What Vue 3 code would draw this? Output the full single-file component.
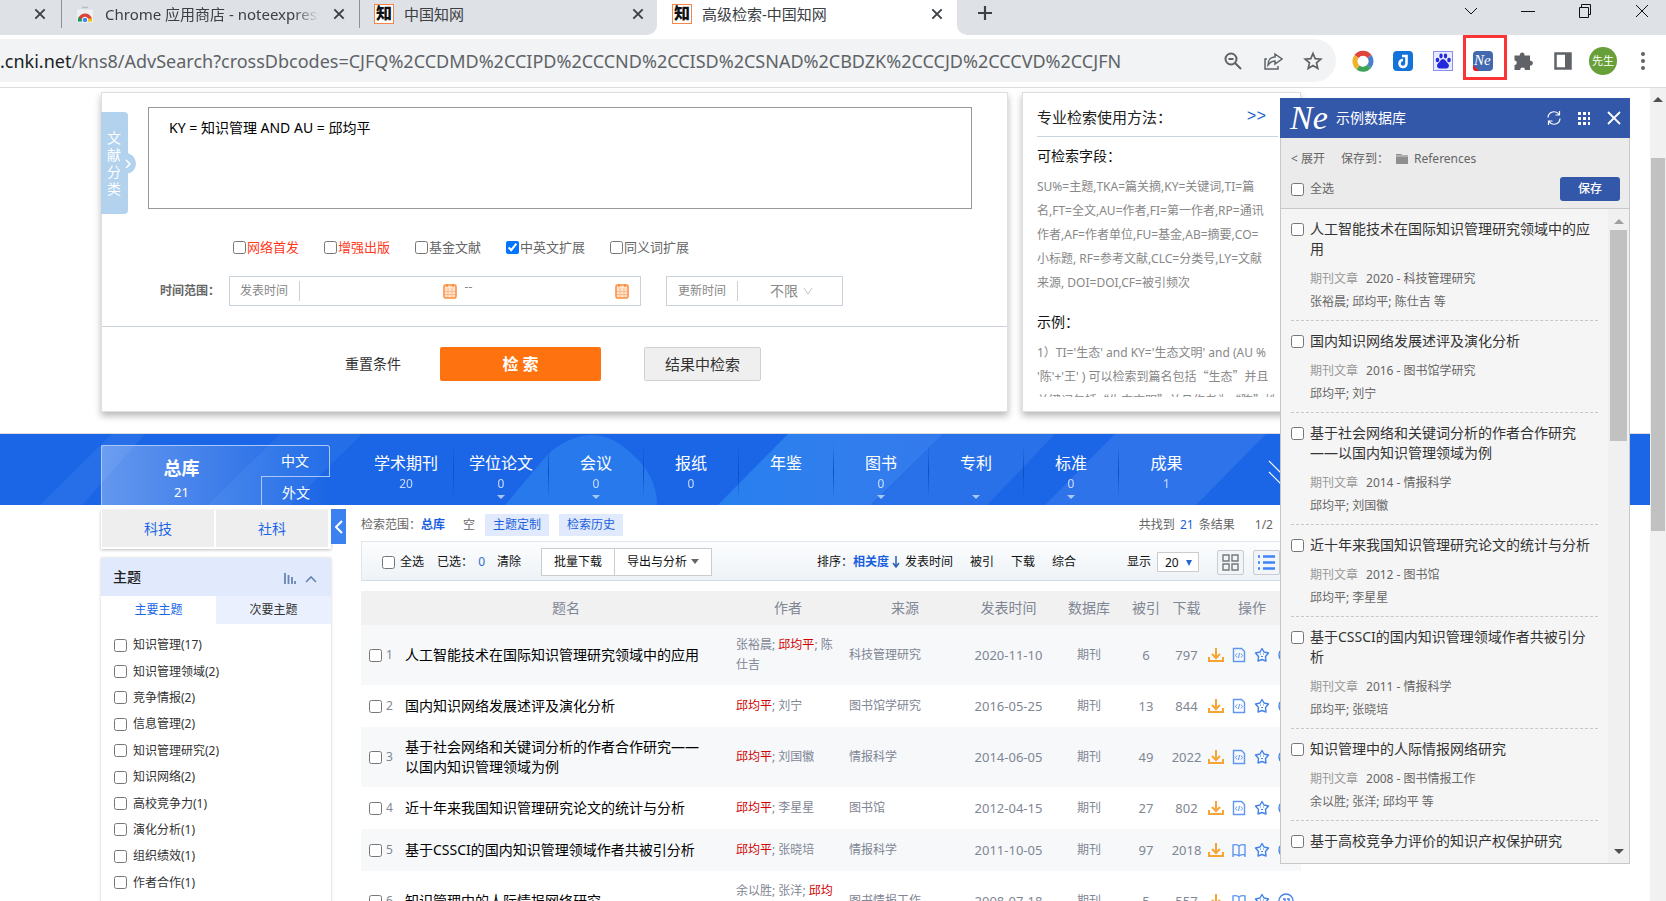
<script setup>
import { ref } from 'vue'

const query = ref('KY = 知识管理 AND AU = 邱均平')
const address = ref('/kns8/AdvSearch?crossDbcodes=CJFQ%2CCDMD%2CCIPD%2CCCND%2CCISD%2CSNAD%2CBDZK%2CCCJD%2CCCVD%2CCJFN')

const options = ref([
  { label: '网络首发', hot: true, on: false },
  { label: '增强出版', hot: true, on: false },
  { label: '基金文献', hot: false, on: false },
  { label: '中英文扩展', hot: false, on: true },
  { label: '同义词扩展', hot: false, on: false }
])

const kinds = [
  { name: '学术期刊', count: '20', more: false },
  { name: '学位论文', count: '0', more: true },
  { name: '会议', count: '0', more: true },
  { name: '报纸', count: '0', more: false },
  { name: '年鉴', count: '', more: false },
  { name: '图书', count: '0', more: true },
  { name: '专利', count: '', more: true },
  { name: '标准', count: '0', more: true },
  { name: '成果', count: '1', more: false }
]

const topics = [
  ['知识管理', 17], ['知识管理领域', 2], ['竞争情报', 2], ['信息管理', 2], ['知识管理研究', 2],
  ['知识网络', 2], ['高校竞争力', 1], ['演化分析', 1], ['组织绩效', 1], ['作者合作', 1]
]

const rows = [
  { title: '人工智能技术在国际知识管理研究领域中的应用', authors: ['张裕晨', '邱均平', '陈仕吉'], source: '科技管理研究', date: '2020-11-10', cited: 6, down: 797, html: true, tall: true },
  { title: '国内知识网络发展述评及演化分析', authors: ['邱均平', '刘宁'], source: '图书馆学研究', date: '2016-05-25', cited: 13, down: 844, html: true },
  { title: '基于社会网络和关键词分析的作者合作研究——以国内知识管理领域为例', authors: ['邱均平', '刘国徽'], source: '情报科学', date: '2014-06-05', cited: 49, down: 2022, html: true, tall: true },
  { title: '近十年来我国知识管理研究论文的统计与分析', authors: ['邱均平', '李星星'], source: '图书馆', date: '2012-04-15', cited: 27, down: 802, html: true },
  { title: '基于CSSCI的国内知识管理领域作者共被引分析', authors: ['邱均平', '张晓培'], source: '情报科学', date: '2011-10-05', cited: 97, down: 2018, html: false },
  { title: '知识管理中的人际情报网络研究', authors: ['余以胜', '张洋', '邱均平'], source: '图书情报工作', date: '2008-07-18', cited: 5, down: 557, html: false, tall: true }
]

const clips = [
  { title: '人工智能技术在国际知识管理研究领域中的应用', info: '2020 - 科技管理研究', authors: '张裕晨; 邱均平; 陈仕吉 等' },
  { title: '国内知识网络发展述评及演化分析', info: '2016 - 图书馆学研究', authors: '邱均平; 刘宁' },
  { title: '基于社会网络和关键词分析的作者合作研究——以国内知识管理领域为例', info: '2014 - 情报科学', authors: '邱均平; 刘国徽' },
  { title: '近十年来我国知识管理研究论文的统计与分析', info: '2012 - 图书馆', authors: '邱均平; 李星星' },
  { title: '基于CSSCI的国内知识管理领域作者共被引分析', info: '2011 - 情报科学', authors: '邱均平; 张晓培' },
  { title: '知识管理中的人际情报网络研究', info: '2008 - 图书情报工作', authors: '余以胜; 张洋; 邱均平 等' },
  { title: '基于高校竞争力评价的知识产权保护研究', info: '', authors: '' }
]
</script>

<template>
  <div class="window">
    <header class="tabs">
      <div class="tab tab-first">
        <button class="x" aria-label="关闭"><svg viewBox="0 0 12 12"><path d="M2 2l8 8M10 2l-8 8" /></svg></button>
      </div>
      <div class="tab tab-store">
        <svg class="store" viewBox="0 0 16 16"><path d="M5 1h6" stroke="#b9bcc0" stroke-width="1.4" /><path d="M0 3h16v13H0z" fill="#eef0f2" /><path d="M1 15a7 7 0 0 1 14-2H8z" fill="#db4437" /><path d="M1 15a7 7 0 0 1 1-5l4 5z" fill="#0f9d58" /><path d="M8 12h7v3H9z" fill="#fbbc05" /><circle cx="8" cy="13.500" r="2.800" fill="#4285f4" stroke="#fff" /></svg>
        <span class="tab-name fade">Chrome 应用商店 - noteexpress</span>
        <button class="x" aria-label="关闭"><svg viewBox="0 0 12 12"><path d="M2 2l8 8M10 2l-8 8" /></svg></button>
      </div>
      <div class="tab tab-cnki">
        <i class="zhi">知</i><span class="tab-name">中国知网</span>
        <button class="x" aria-label="关闭"><svg viewBox="0 0 12 12"><path d="M2 2l8 8M10 2l-8 8" /></svg></button>
      </div>
      <div class="tab tab-active">
        <i class="zhi">知</i><span class="tab-name">高级检索-中国知网</span>
        <button class="x" aria-label="关闭"><svg viewBox="0 0 12 12"><path d="M2 2l8 8M10 2l-8 8" /></svg></button>
      </div>
      <div class="strip">
        <button class="plus" aria-label="新标签页"><svg viewBox="0 0 16 16"><path d="M8 1v14M1 8h14" /></svg></button>
        <div class="controls">
          <button aria-label="搜索标签页"><svg viewBox="0 0 14 14"><path d="M1 4l6 6 6-6" /></svg></button>
          <button aria-label="最小化"><svg viewBox="0 0 14 14"><path d="M0 7.500h14" /></svg></button>
          <button aria-label="还原"><svg viewBox="0 0 14 14"><path d="M1.500 3.500h9v10h-9zM3.500 3.500v-3h9v10h-2" /></svg></button>
          <button aria-label="关闭窗口"><svg viewBox="0 0 14 14"><path d="M1 1l12 12M13 1L1 13" /></svg></button>
        </div>
      </div>
    </header>

    <div class="toolbar">
      <div class="omnibox">
        <span class="host">.cnki.net</span>
        <input v-model="address" class="address" type="text" aria-label="地址栏" />
        <button class="tool" aria-label="缩放"><svg viewBox="0 0 20 20"><circle cx="8" cy="8" r="5.500" /><path d="M12 12l6 6M5.500 8h5" /></svg></button>
        <button class="tool" aria-label="分享"><svg viewBox="0 0 20 20"><path d="M4 8H2v10h13v-3" stroke-width="1.500" /><path d="M12 3l7 5-7 5v-3c-3 0-5 1-7 4 0-5 3-8 7-8z" stroke-width="1.500" /></svg></button>
        <button class="tool" aria-label="收藏"><svg viewBox="0 0 20 20"><path d="M10 2.500l2.200 5.200 5.600.500-4.300 3.700 1.300 5.500L10 14.500l-4.800 2.900 1.300-5.500-4.300-3.700 5.600-.500z" stroke-width="1.700" /></svg></button>
      </div>
      <div class="exts">
        <svg viewBox="0 0 22 22"><g fill="none" stroke-width="5"><path d="M4.500 6.500a8 8 0 0 1 13 0" stroke="#e0453b" /><path d="M17.500 6.500a8 8 0 0 1-.500 10" stroke="#4a7fd0" /><path d="M17 16.500a8 8 0 0 1-11 1" stroke="#3fa35b" /><path d="M6 17.500a8 8 0 0 1-1.500-11" stroke="#efb22c" /></g></svg>
        <svg viewBox="0 0 22 22"><rect x="1" y="1" width="20" height="20" rx="4" fill="#1473d8" /><path d="M10 6h4.500v7.500a3.500 3.500 0 1 1-3.500-3.500" fill="none" stroke="#fff" stroke-width="2.600" /></svg>
        <svg viewBox="0 0 22 22"><rect x="1.500" y="1.500" width="19" height="19" fill="#e8ebff" stroke="#8b90f0" /><g fill="#2329dc"><ellipse cx="5.500" cy="10" rx="1.800" ry="2.300" /><ellipse cx="9" cy="6" rx="1.700" ry="2.400" /><ellipse cx="13.500" cy="6" rx="1.700" ry="2.400" /><ellipse cx="17" cy="10" rx="1.800" ry="2.300" /><path d="M11 9c2 0 3 2.500 5 4.500s.500 5-1.500 5h-7c-2 0-3.500-3-1.500-5S9 9 11 9z" /></g></svg>
        <span class="marked"><svg viewBox="0 0 22 22"><rect x="1" y="1" width="20" height="20" rx="4" fill="#4268ae" /><path d="M1 15l6 6H4a3 3 0 0 1-3-3z" fill="#f01818" /><text x="2" y="15" font-family="Liberation Serif, serif" font-style="italic" font-size="15" fill="#fff">Ne</text></svg></span>
        <svg viewBox="0 0 22 22"><path d="M2.500 5.500h5.300a2.400 2.400 0 1 1 4.700 0H18v5.300a2.400 2.400 0 1 1 0 4.700V20h-5a2.400 2.400 0 0 0-4.800 0H2.500v-5a2.300 2.300 0 0 0 0-4.600z" fill="#5f6368" /></svg>
        <svg viewBox="0 0 22 22"><path d="M3.500 3.500h15v15h-15z" fill="#fff" stroke="#5f6368" stroke-width="2.500" /><path d="M13 3h6v16h-6z" fill="#5f6368" /></svg>
        <span class="avatar">先生</span>
        <svg viewBox="0 0 22 22"><g fill="#5f6368"><circle cx="11" cy="4" r="2" /><circle cx="11" cy="11" r="2" /><circle cx="11" cy="18" r="2" /></g></svg>
      </div>
    </div>

    <div class="viewport">
      <main class="page">
        <section class="top wrap">
          <form class="card search" @submit.prevent>
            <div class="side-tab">文献分类<span class="knob"><svg viewBox="0 0 8 12"><path d="M2 2l4 4-4 4" /></svg></span></div>
            <textarea v-model="query" aria-label="检索式"></textarea>
            <div class="options">
              <label v-for="o in options" :key="o.label" :class="{ hot: o.hot }"><input v-model="o.on" type="checkbox" />{{ o.label }}</label>
            </div>
            <div class="range">
              <b>时间范围：</b>
              <div class="dates">
                <span class="lead">发表时间</span>
                <input type="text" aria-label="开始日期" />
                <svg class="cal" viewBox="0 0 14 16"><rect x="1" y="2" width="12" height="13" rx="1.500" /><path class="grid" d="M2 8.500h10M2 11.500h10M5 5v9M9 5v9" /><path d="M4 1v3M10 1v3" /></svg>
                <span class="to">--</span>
                <input type="text" aria-label="结束日期" />
                <svg class="cal" viewBox="0 0 14 16"><rect x="1" y="2" width="12" height="13" rx="1.500" /><path class="grid" d="M2 8.500h10M2 11.500h10M5 5v9M9 5v9" /><path d="M4 1v3M10 1v3" /></svg>
              </div>
              <div class="updated">
                <label class="lead" for="upd">更新时间</label>
                <select id="upd"><option>不限</option></select>
                <svg class="vee" viewBox="0 0 10 8"><path d="M1 1l4 6 4-6" /></svg>
              </div>
            </div>
            <div class="actions">
              <a href="#">重置条件</a>
              <button class="go" type="submit">检 索</button>
              <button class="within" type="button">结果中检索</button>
            </div>
          </form>
          <aside class="card help">
            <div class="help-head"><h2>专业检索使用方法：</h2><a href="#">&gt;&gt;</a></div>
            <div class="help-body">
              <h3>可检索字段：</h3>
              <p>SU%=主题,TKA=篇关摘,KY=关键词,TI=篇<br />名,FT=全文,AU=作者,FI=第一作者,RP=通讯<br />作者,AF=作者单位,FU=基金,AB=摘要,CO=<br />小标题, RF=参考文献,CLC=分类号,LY=文献<br />来源, DOI=DOI,CF=被引频次</p>
              <h3 class="second">示例：</h3>
              <p>1）TI='生态' and KY='生态文明' and (AU %<br />'陈'+'王' ) 可以检索到篇名包括<span class="cjk">“生态”</span>并且<br />关键词包括<span class="cjk">“生态文明”</span>并且作者为<span class="cjk">“陈”</span>姓</p>
            </div>
          </aside>
        </section>

        <nav class="band">
          <svg class="rays" viewBox="0 0 1650 71" preserveAspectRatio="none">
            <defs><linearGradient id="ray"><stop offset="0" stop-color="#2a86f0" stop-opacity=".8" /><stop offset="1" stop-color="#4f92f5" stop-opacity=".45" /></linearGradient></defs>
            <path d="M112 0h33L82 71H40z" fill="#3b82ee" opacity=".35" />
            <path d="M280 0h82l-72 71h-82z" fill="#3b82ee" opacity=".3" />
            <path d="M505 71L548 20q45-38 84 0 25 22 25 51z" fill="#2c80ee" opacity=".75" />
            <path d="M788 0h155l-72 71H718z" fill="url(#ray)" />
            <path d="M943 0h112l-68 71H872z" fill="#3b7fee" opacity=".45" />
            <path d="M1115 0h151l-70 71h-151z" fill="#4480f0" opacity=".5" />
          </svg>
          <div class="band-in wrap">
            <div class="total">
              <a class="all" href="#"><b>总库</b><span>21</span></a>
              <div class="langs"><a href="#">中文</a><a href="#">外文</a></div>
            </div>
            <ul class="kinds">
              <li v-for="k in kinds" :key="k.name">
                <a href="#"><span>{{ k.name }}</span><em>{{ k.count }}</em><i v-if="k.more"></i></a>
              </li>
            </ul>
            <svg class="next" viewBox="0 0 24 24"><path d="M1 1l14 14M1 12l14 14" /></svg>
          </div>
        </nav>

        <div class="body wrap">
          <aside class="filters">
            <div class="fields"><a href="#">科技</a><a href="#">社科</a></div>
            <section class="facet">
              <header>
                <h2>主题</h2>
                <svg class="bars" viewBox="0 0 12 11"><path d="M1 0v11M4.500 2v9M8 4v7M11 8v3" /></svg>
                <svg class="up" viewBox="0 0 12 8"><path d="M1 7l5-5 5 5" /></svg>
              </header>
              <div class="facet-tabs"><button class="on">主要主题</button><button>次要主题</button></div>
              <ul>
                <li v-for="t in topics" :key="t[0]"><label><input type="checkbox" />{{ t[0] }}({{ t[1] }})</label></li>
              </ul>
            </section>
          </aside>
          <button class="fold" aria-label="收起"><svg viewBox="0 0 8 14"><path d="M7 1L1 7l6 6" /></svg></button>

          <section class="results">
            <div class="scope">
              <span>检索范围：</span><b>总库</b><span class="empty">空</span>
              <a class="pill" href="#">主题定制</a><a class="pill" href="#">检索历史</a>
              <span class="found">共找到 <em>21</em> 条结果</span><span>1/2</span>
            </div>
            <div class="bar">
              <label class="pick-all"><input type="checkbox" />全选</label>
              <span class="chosen">已选： <em>0</em></span>
              <a class="clear" href="#">清除</a>
              <div class="batch"><button>批量下载</button><button>导出与分析<i></i></button></div>
              <div class="sort">
                <span>排序：</span><a class="cur" href="#">相关度</a>
                <svg viewBox="0 0 8 12"><path d="M4 0v10M1 7l3 4 3-4" /></svg>
                <a href="#">发表时间</a><a href="#">被引</a><a href="#">下载</a><a href="#">综合</a>
              </div>
              <div class="show">
                <label for="size">显示</label>
                <span class="size"><select id="size"><option>20</option></select><i></i></span>
                <button class="view" aria-label="网格"><svg viewBox="0 0 17 17"><path d="M1 1h6v6H1zM10 1h6v6h-6zM1 10h6v6H1zM10 10h6v6h-6z" /></svg></button>
                <button class="view lines" aria-label="列表"><svg viewBox="0 0 17 17"><path d="M0 2.500h2M5 2.500h12M0 8.500h2M5 8.500h12M0 14.500h2M5 14.500h12" /></svg></button>
              </div>
            </div>
            <table>
              <colgroup><col class="c-num" /><col /><col class="c-au" /><col class="c-src" /><col class="c-date" /><col class="c-db" /><col class="c-cite" /><col class="c-down" /><col class="c-ops" /></colgroup>
              <thead>
                <tr><th></th><th>题名</th><th>作者</th><th>来源</th><th>发表时间</th><th>数据库</th><th>被引</th><th>下载</th><th>操作</th></tr>
              </thead>
              <tbody>
                <tr v-for="(r, i) in rows" :key="r.title" :class="{ tall: r.tall }">
                  <td class="num"><label><input type="checkbox" />{{ i + 1 }}</label></td>
                  <td class="title"><a href="#">{{ r.title }}</a></td>
                  <td class="au"><template v-for="(a, n) in r.authors" :key="a"><a href="#" :class="{ hit: a === '邱均平' }">{{ a }}</a><template v-if="n < r.authors.length - 1">; </template></template></td>
                  <td class="src"><a href="#">{{ r.source }}</a></td>
                  <td class="fig">{{ r.date }}</td>
                  <td>期刊</td>
                  <td class="fig">{{ r.cited }}</td>
                  <td class="fig">{{ r.down }}</td>
                  <td class="ops"><div>
                    <svg class="dl" viewBox="0 0 16 16"><path d="M8 1v10M4 7l4 4 4-4M1 10v4h14v-4" /></svg>
                    <svg v-if="r.html" class="doc" viewBox="0 0 14 16"><path d="M1.500 1.500h8l3 3v10h-11z" /><path d="M5 6.500L3.500 8.500 5 10.500M9 6.500l1.500 2L9 10.500M7.500 6l-1 5" stroke-width="1" /></svg>
                    <svg v-else class="doc" viewBox="0 0 14 16"><path d="M7 4v10M1 13V3q3-1 6 1 3-2 6-1v10q-3-1-6 1-3-2-6-1zM1 13v2M13 13v2" /></svg>
                    <svg class="fav" viewBox="0 0 16 16"><path d="M8 1.500l2 3.500 4.500 1-3 3.500.500 4.500L8 12.500 4 14l.500-4.500-3-3.500L6 5z" stroke-linejoin="round" /><path d="M6 7h1M9 7h1M7 9.500h2" stroke-width="1" /></svg>
                    <svg class="cite" viewBox="0 0 16 16"><circle cx="8" cy="8" r="7" /><path d="M5 6h2v2q0 2-2 2M9 6h2v2q0 2-2 2" stroke-width="1.500" /></svg>
                  </div></td>
                </tr>
              </tbody>
            </table>
          </section>
        </div>
      </main>
      <div class="scroll"><i class="tri up-tri"></i><span></span></div>

      <aside class="panel">
        <header>
          <span class="ne">Ne</span><h2>示例数据库</h2>
          <button aria-label="刷新"><svg viewBox="0 0 14 14"><path d="M1 6.500A6 6 0 0 1 12 3.500M13 7.500A6 6 0 0 1 2 10.500M12.500 0v4h-4M1.500 14v-4h4" stroke-width="1.200" /></svg></button>
          <button aria-label="菜单"><svg viewBox="0 0 14 14" class="nine"><path d="M1 2.500h12M1 7.500h12M1 12.500h12" /></svg></button>
          <button aria-label="关闭面板"><svg viewBox="0 0 14 14"><path d="M1 1l12 12M13 1L1 13" stroke-width="1.800" /></svg></button>
        </header>
        <div class="dest">
          <div class="path"><a href="#">&lt; 展开</a><span>保存到：</span><svg viewBox="0 0 12 10"><path d="M0 0h5l1 1h6v9H0z" fill="#8f8f8f" /><path d="M0 2h12" stroke="#d0d0d0" /></svg><span>References</span></div>
          <div class="save"><label><input type="checkbox" />全选</label><button>保存</button></div>
        </div>
        <div class="clips">
          <ul>
            <li v-for="c in clips" :key="c.title">
              <label><input type="checkbox" /><span>{{ c.title }}</span></label>
              <p v-if="c.info"><em>期刊文章</em>{{ c.info }}</p>
              <p v-if="c.authors">{{ c.authors }}</p>
            </li>
          </ul>
          <div class="scroll inner"><i class="tri up-tri"></i><span></span><i class="tri down-tri"></i></div>
        </div>
      </aside>
    </div>
  </div>
</template>

<style>
body { margin: 0; background: #fff; }
</style>

<style scoped>
*, *::after { box-sizing: border-box; }
.window { height: 100vh; display: flex; flex-direction: column; overflow: hidden; background: #fff; color: #333; font-family: "Noto Sans", "Noto Sans CJK SC", sans-serif; font-size: 12px; line-height: 20px; }
button, input, select, textarea { font: inherit; color: inherit; }
button { padding: 0; border: 0; background: none; }
a { color: inherit; text-decoration: none; }
ul { margin: 0; padding: 0; list-style: none; }
h2, h3, p { margin: 0; font-weight: 400; }
em, i { font-style: normal; }
svg { display: block; flex: none; fill: none; }
input[type="checkbox"] { width: 13px; height: 13px; margin: 0; flex: none; }
input[type="text"] { min-width: 0; padding: 0; border: 0; outline: 0; background: none; }

/* browser tabs */
.tabs { display: flex; height: 35px; flex: none; background: linear-gradient(#fff, #fff) 640px 0 / 340px 35px no-repeat, #dee1e6; }
.tab { display: flex; align-items: center; height: 28px; }
.tab-first { width: 62px; justify-content: flex-end; padding-right: 14px; border-right: 1px solid #8f9297; }
.tab-store { width: 298px; padding: 0 13px 0 15px; border-right: 1px solid #8f9297; }
.tab-cnki { width: 297px; height: 35px; padding: 0 12px 7px 14px; border-radius: 0 0 10px 0; background: #dee1e6; }
.tab-active { width: 300px; height: 35px; padding: 0 13px 7px 15px; background: #fff; }
.strip { display: flex; flex: 1; border-radius: 0 0 0 10px; background: #dee1e6; }
.x { width: 14px; height: 14px; margin-left: auto; }
.x svg { width: 14px; height: 14px; stroke: #3c4043; stroke-width: 1.6; }
.tab-name { color: #3c4043; font-size: 15px; white-space: nowrap; }
.store { width: 16px; height: 17px; margin-right: 12px; }
.fade { width: 214px; overflow: hidden; -webkit-mask-image: linear-gradient(90deg, #000 88%, transparent); mask-image: linear-gradient(90deg, #000 88%, transparent); }
.zhi { width: 20px; height: 20px; margin-right: 10px; border: 1px solid #f58549; background: #fff; color: #111; font-size: 16px; font-weight: 900; line-height: 17px; text-align: center; }
.plus { width: 16px; height: 16px; margin: 5px 0 0 20px; }
.plus svg { stroke: #3c4043; stroke-width: 2.2; }
.controls { display: flex; gap: 43px; margin: 4px 17px 0 auto; }
.controls button { width: 14px; height: 14px; }
.controls svg { width: 14px; height: 14px; stroke: #111; }

.toolbar { display: flex; align-items: center; flex: none; height: 53px; padding-bottom: 1px; border-bottom: 1px solid #dcdcdc; }
.omnibox { display: flex; flex: 1; align-items: center; height: 43px; padding-right: 13px; border-radius: 0 22px 22px 0; background: #f1f3f4; font-size: 18px; }
.host { color: #202124; }
.address { flex: 1; height: 30px; color: #5f6368; }
.tool { width: 20px; height: 20px; margin-left: 20px; }
.tool svg { stroke: #5f6368; stroke-width: 2; }
.exts { display: flex; align-items: center; gap: 18px; padding: 0 12px 0 16px; }
.exts svg { width: 22px; height: 22px; }
.marked { position: relative; }
.marked::after { content: ""; position: absolute; left: -9px; top: -15px; width: 44px; height: 45px; border: 3px solid #fb3535; }
.avatar { width: 28px; height: 28px; margin: 0 -3px; border-radius: 50%; background: #689f38; color: #fff; font-size: 11px; line-height: 28px; text-align: center; }

.viewport { position: relative; display: flex; flex: 1; min-height: 0; }
.page { flex: 1; min-width: 0; overflow: hidden; }
.wrap { width: calc(100% - 450px); margin-left: 101px; }
.scroll { display: flex; flex-direction: column; align-items: center; width: 16px; padding-top: 9px; background: #f1f1f1; }
.scroll span { width: 14px; height: 373px; margin-top: 56px; background: #c1c1c1; }
.tri { width: 0; height: 0; border: 5px solid transparent; }
.up-tri { border-top: 0; border-bottom-color: #505050; }
.down-tri { border-bottom: 0; border-top-color: #505050; }

/* search form */
.top { display: flex; align-items: stretch; gap: 14px; padding: 4px 0 21px; }
.card { border: 1px solid #dfdfdf; background: #fff; box-shadow: 0 4px 7px rgba(0, 0, 0, .28); }
.search { position: relative; flex: 1; }
.side-tab { position: absolute; left: -1px; top: 19px; width: 27px; height: 102px; padding: 17px 6px; border-radius: 0 4px 4px 0; background: #b2d2ed; color: #fff; font-size: 14px; line-height: 17px; }
.knob { position: absolute; right: -8px; top: 41px; display: flex; align-items: center; justify-content: flex-end; width: 16px; height: 21px; padding-right: 4px; border-radius: 0 11px 11px 0; background: #b2d2ed; }
.knob svg { width: 8px; height: 12px; stroke: #fff; stroke-width: 1.5; }
textarea { display: block; width: calc(100% - 81px); height: 102px; margin: 14px 0 0 46px; padding: 10px 20px; border: 1px solid #999; outline: 0; resize: none; color: #000; font-size: 14px; line-height: 20px; }
.options { display: flex; gap: 25px; height: 20px; margin: 28px 0 0 131px; color: #666; font-size: 13px; }
.options label { display: flex; align-items: center; gap: 1px; }
.options .hot { color: #ff3a1c; }
.range { display: flex; align-items: center; margin: 19px 0 20px 58px; color: #666; }
.range b { width: 69px; }
.dates, .updated { display: flex; align-items: center; height: 30px; border: 1px solid #c9d1db; color: #888; }
.dates { width: 412px; padding: 0 11px 0 10px; }
.lead { padding-right: 11px; border-right: 1px solid #c9d1db; }
.dates input { flex: 1; height: 24px; }
.cal { width: 14px; height: 16px; stroke: #fb8c3c; stroke-width: 1.5; fill: #ffe3cc; }
.cal .grid { stroke: #fdb989; stroke-width: 1; }
.to { width: 16px; padding: 0 0 8px 8px; }
.updated { width: 177px; margin-left: 25px; padding-left: 11px; }
.updated select { width: 62px; padding: 0 0 0 32px; border: 0; appearance: none; background: none; font-size: 14px; }
.vee { width: 10px; height: 8px; margin-left: 3px; stroke: #c4c4c4; }
.actions { display: flex; align-items: center; height: 85px; padding: 0 0 11px 243px; border-top: 1px solid #ccd2da; }
.actions > a { width: 95px; color: #333; font-size: 14px; }
.go { width: 161px; height: 34px; border-radius: 2px; background: #ff7210; color: #fff; font-size: 16px; font-weight: 700; }
.within { width: 117px; height: 34px; margin-left: 43px; border: 1px solid #d0d0d0; border-radius: 2px; background: #efefef; font-size: 15px; }

.help { width: 279px; padding: 12px 22px 14px 14px; }
.help-head { display: flex; align-items: center; justify-content: space-between; height: 32px; padding: 0 12px 8px 0; border-bottom: 1px solid #c9d4de; color: #222; }
.help-head h2 { font-size: 15px; }
.help-head a { color: #1b5fc8; font-family: "Liberation Mono", monospace; font-size: 16px; }
.help-body { height: 260px; overflow: hidden; color: #888; line-height: 24px; white-space: nowrap; }
.help-body h3 { margin: 7px 0; color: #111; font-size: 14px; line-height: 24px; }
.help-body .second { margin: 15px 0 7px; }
.cjk { font-family: "Noto Sans CJK SC", sans-serif; line-height: 20px; }

/* category band */
.band { position: relative; height: 72px; border-top: 1px solid #dcdcdc; background: #1b66e6; color: #fff; }
.rays { position: absolute; left: 0; top: 0; width: 100%; height: 71px; }
.band-in { position: relative; display: flex; height: 71px; overflow: hidden; }
.total { display: flex; width: 229px; flex: none; margin: 11px 29px 0 0; background: linear-gradient(90deg, rgba(255, 255, 255, .32), rgba(255, 255, 255, 0)); }
.all { display: flex; flex-direction: column; align-items: center; width: 160px; padding-top: 10px; border: 1px solid #a9c8f8; border-width: 1px 0 0 1px; border-radius: 3px 0 0; }
.all b { font-size: 18px; line-height: 24px; }
.all span { font-size: 13px; line-height: 24px; }
.langs { display: flex; flex-direction: column; flex: 1; font-size: 14px; text-align: center; }
.langs a { height: 32px; line-height: 30px; border: 1px solid #a9c8f8; border-width: 1px 1px 1px 0; border-radius: 0 3px 0 0; }
.langs a + a { flex: 1; line-height: 32px; border-width: 0 0 0 1px; border-radius: 0; }
.kinds { display: flex; }
.kinds li { width: 95px; border-right: 1px solid; border-image: linear-gradient(transparent 15%, #0c4fc4, transparent 90%) 1; }
.kinds li:last-child { border: 0; }
.kinds a { display: flex; flex-direction: column; align-items: center; padding-top: 17px; }
.kinds span { font-size: 16px; line-height: 24px; }
.kinds em { height: 18px; font-size: 12px; line-height: 18px; opacity: .75; }
.kinds i { margin-top: 2px; border: 4px solid transparent; border-bottom: 0; border-top-color: #a9c8f8; }
.next { width: 24px; height: 24px; margin: 26px 0 0 54px; stroke: #fff; stroke-width: 1.2; }

/* filters */
.body { display: flex; align-items: flex-start; }
.filters { width: 230px; flex: none; }
.fields { display: flex; gap: 2px; height: 39px; margin-top: 5px; padding: 0 3px 2px 1px; background: #fff; box-shadow: 0 1px 3px rgba(0, 0, 0, .25); color: #1b66e6; font-size: 14px; }
.fields a { flex: 1; background: #eee; line-height: 38px; text-align: center; }
.facet { margin-top: 9px; padding-bottom: 24px; box-shadow: 0 0 3px rgba(0, 0, 0, .2); }
.facet header { display: flex; align-items: center; height: 38px; padding: 0 14px 0 12px; background: #e0eafc; color: #6a84b3; }
.facet h2 { flex: 1; color: #222; font-size: 14px; font-weight: 500; }
.bars { width: 12px; height: 11px; margin-top: 3px; stroke: currentColor; stroke-width: 1.8; }
.up { width: 12px; height: 8px; margin: 3px 0 0 9px; stroke: currentColor; stroke-width: 1.6; }
.facet-tabs { display: flex; height: 28px; }
.facet-tabs button { flex: 1; background: #eaf0fd; }
.facet-tabs .on { background: #fff; color: #1b66e6; }
.facet ul { display: grid; grid-auto-rows: 1fr; height: 264px; margin-top: 8px; padding: 0 13px; }
.facet li { display: flex; }
.facet label { display: flex; align-items: center; gap: 6px; }
.fold { display: grid; place-items: center; width: 15px; height: 35px; flex: none; margin-top: 4px; background: #3b82f0; }
.fold svg { width: 8px; height: 14px; stroke: #fff; stroke-width: 2; }

/* results */
.results { flex: 1; min-width: 0; margin-left: 15px; }
.scope { display: flex; align-items: center; height: 36px; padding: 3px 28px 0 0; color: #666; }
.scope b, .scope em { color: #1b5fe0; }
.empty { margin: 0 10px 0 18px; }
.pill { height: 22px; margin-right: 10px; padding: 0 8px; background: #e0eafc; color: #1b5fe0; line-height: 22px; }
.found { margin: 0 20px 0 auto; }
.found em { margin: 0 2px; }
.bar { display: flex; align-items: center; height: 40px; padding: 2px 20px 0; border: 1px solid #e2e6ea; border-bottom-color: #d5dce4; background: linear-gradient(#fcfdfe, #eef3f7); color: #111; }
.pick-all { display: flex; align-items: center; gap: 5px; }
.chosen { margin: 0 12px 0 13px; }
.chosen em { margin-left: 2px; color: #2a6fd0; }
.batch { display: flex; margin-left: 20px; }
.batch button { height: 28px; padding: 0 12px; border: 1px solid #ccc; background: #fff; }
.batch button + button { margin-left: -1px; }
.batch i { display: inline-block; margin-left: 4px; border: 4px solid transparent; border-top: 5px solid #666; border-bottom: 0; vertical-align: 2px; }
.sort { display: flex; align-items: center; margin-left: auto; }
.sort .cur { color: #1b5fe0; font-weight: 700; }
.sort svg { width: 8px; height: 12px; margin: 0 5px 0 3px; stroke: #2a5fb0; stroke-width: 1.5; }
.sort a + a { margin-left: 17px; }
.show { display: flex; align-items: center; margin-left: 51px; }
.size { position: relative; margin: 0 18px 0 6px; }
.size select { width: 42px; height: 20px; padding: 0 0 0 7px; border: 1px solid #ccc; border-radius: 0; appearance: none; background: #fff; }
.size i { position: absolute; right: 7px; top: 8px; border: 3px solid transparent; border-top: 6px solid #2468c8; border-bottom: 0; }
.view { display: grid; place-items: center; width: 27px; height: 25px; border: 1px solid #c8ccd2; border-radius: 2px; background: #f2f5f8; }
.view svg { width: 17px; height: 17px; stroke: #777; stroke-width: 1.4; }
.lines { margin-left: 9px; }
.lines svg { stroke: #3f83f8; stroke-width: 2.4; }

table { width: 100%; margin-top: 10px; border-collapse: collapse; table-layout: fixed; color: #7f8694; }
.c-num { width: 44px; }
.c-au { width: 122px; }
.c-src { width: 112px; }
.c-date { width: 95px; }
.c-db { width: 66px; }
.c-cite { width: 48px; }
.c-down { width: 33px; }
.c-ops { width: 98px; }
th { height: 34px; padding: 0; background: #f1f1f1; font-size: 14px; font-weight: 400; white-space: nowrap; }
td { height: 42px; padding: 0; text-align: center; white-space: nowrap; }
.tall td { height: 60px; }
tbody tr:nth-child(odd) { background: #f6f8fa; }
.num label { display: flex; align-items: center; gap: 4px; padding-left: 8px; }
.title { padding-right: 20px; color: #000; font-size: 14px; text-align: left; white-space: normal; }
.au { padding: 0 8px 0 9px; text-align: left; white-space: normal; }
.src { text-align: left; }
.hit { color: #d00000; }
.fig { font-size: 13px; }
.ops div { display: flex; align-items: center; padding-left: 5px; }
.ops svg { width: 16px; height: 16px; stroke: #4483e8; stroke-width: 1.4; }
.ops .dl { stroke: #f6a535; stroke-width: 2; }
.ops .doc { width: 14px; margin: 0 8px; stroke: #5f96ee; }
.ops .cite { margin-left: 8px; }

/* capture panel */
.panel { position: absolute; right: 36px; top: 10px; display: flex; flex-direction: column; width: 350px; height: calc(100% - 47px); border: 1px solid #c8c8c8; border-top: 0; background: #f5f5f5; color: #666; }
.panel header { display: flex; align-items: center; flex: none; height: 40px; margin: 0 -1px; padding: 0 9px 0 10px; background: #3357a9; color: #fff; }
.ne { width: 46px; font-family: "Liberation Serif", serif; font-size: 34px; font-style: italic; line-height: 38px; }
.panel h2 { flex: 1; font-size: 14px; }
.panel header button { width: 14px; height: 14px; margin-left: 16px; }
.panel header svg { width: 14px; height: 14px; stroke: #fff; }
.panel .nine { stroke-width: 3; stroke-dasharray: 3 2; }
.dest { flex: none; height: 71px; padding: 11px 9px 0 10px; border-bottom: 1px solid #c8c8c8; background: #ebebeb; }
.path { display: flex; align-items: center; }
.path span:first-of-type { margin: 0 7px 0 16px; }
.path svg { width: 12px; height: 10px; margin-right: 6px; }
.save { display: flex; justify-content: space-between; align-items: center; margin-top: 8px; }
.save label { display: flex; align-items: center; gap: 6px; }
.save button { width: 60px; height: 24px; border-radius: 3px; background: #3357a9; color: #fff; font-weight: 500; }
.clips { display: flex; flex: 1; min-height: 0; }
.clips ul { flex: 1; overflow: hidden; padding: 0 10px; }
.clips li { padding: 10px 0 7px; border-bottom: 1px dashed #c8c8c8; }
.clips label { display: flex; gap: 6px; margin-bottom: 8px; padding-right: 6px; color: #333; font-size: 14px; line-height: 20px; }
.clips label input { margin-top: 4px; }
.clips p { padding-left: 19px; line-height: 23px; }
.clips em { margin-right: 8px; color: #999; }
.inner { width: 21px; padding: 10px 0 9px; background: #f0f0f0; }
.inner span { width: 17px; height: 211px; margin-top: 6px; }
.inner .up-tri { border-bottom-color: #a0a0a0; }
.inner .down-tri { margin-top: auto; }
</style>
